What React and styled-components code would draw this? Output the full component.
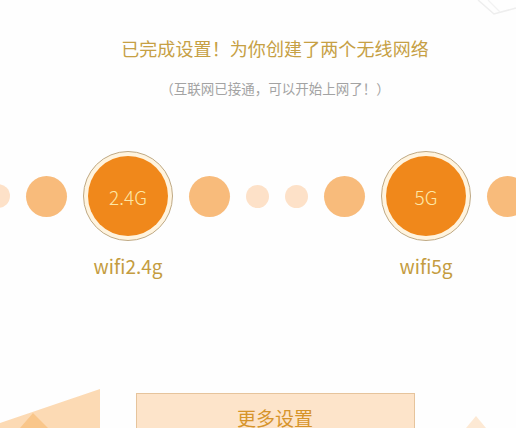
import styled, { createGlobalStyle } from 'styled-components';

const GlobalStyle = createGlobalStyle`
  html, body {
    margin: 0;
    padding: 0;
    background: #fefefe;
  }
  * {
    box-sizing: border-box;
  }
`;

const FONT = `"Noto Sans CJK SC", "Noto Sans", sans-serif`;

const tones = {
  pale: '#fde1c8',
  mid: '#f8bb7b',
};

const nodes = [
  { size: 24, tone: 'pale' },
  { size: 41, tone: 'mid' },
  { band: '2.4G', name: 'wifi2.4g' },
  { size: 41, tone: 'mid' },
  { size: 23, tone: 'pale' },
  { size: 23, tone: 'pale' },
  { size: 41, tone: 'mid' },
  { band: '5G', name: 'wifi5g' },
  { size: 41, tone: 'mid' },
];

const App = () => {
  return (
    <>
      <GlobalStyle />
      <Page>
        <TopDeco viewBox="0 0 46 20" width="46" height="20">
          <path d="M8 0 L24 14 L46 8" fill="none" stroke="#eeeeee" strokeWidth="1.5" />
          <path d="M18 0 L30 12" fill="none" stroke="#f2f2f2" strokeWidth="1.2" />
        </TopDeco>

        <Header>
          <Title>已完成设置！为你创建了两个无线网络</Title>
          <SubTitle>（互联网已接通，可以开始上网了！）</SubTitle>
        </Header>

        <Row>
          {nodes.map((n, i) =>
            n.band ? (
              <Network key={i}>
                <Ring>
                  <Core>{n.band}</Core>
                </Ring>
                <Label>{n.name}</Label>
              </Network>
            ) : (
              <Dot key={i} size={n.size} tone={n.tone} />
            )
          )}
        </Row>

        <Footer>
          <MoreButton>更多设置</MoreButton>
        </Footer>

        <LeftDeco viewBox="0 0 110 40" width="110" height="40">
          <polygon points="0,35 100,1 100,40 0,40" fill="#fcdab4" />
          <polygon points="33,25 48,40 20,40" fill="#f9c68a" />
        </LeftDeco>
        <RightDeco viewBox="0 0 20 12" width="20" height="12">
          <polygon points="10,0 20,12 0,12" fill="#fde9d4" />
        </RightDeco>
      </Page>
    </>
  );
};

export default App;

const Page = styled.div`
  position: relative;
  width: 516px;
  height: 428px;
  overflow: hidden;
  background: #fefefe;
  font-family: ${FONT};
  display: flex;
  flex-direction: column;
`;

const Header = styled.div`
  padding-left: 34px;
  display: flex;
  flex-direction: column;
  align-items: center;
`;

const Title = styled.h1`
  margin: 37px 0 0;
  font-size: 18px;
  font-weight: 400;
  line-height: 22px;
  color: #c6a044;
  letter-spacing: 0.1px;
`;

const SubTitle = styled.p`
  margin: 21px 0 0;
  font-size: 13.5px;
  line-height: 16px;
  color: #a3a3a3;
`;

const Row = styled.div`
  margin-top: 55px;
  width: 100%;
  display: flex;
  justify-content: center;
  align-items: flex-start;
  gap: 16px;
  margin-left: -1px;
`;

const Dot = styled.div`
  flex-shrink: 0;
  width: ${p => p.size}px;
  height: ${p => p.size}px;
  margin-top: ${p => (90 - p.size) / 2}px;
  border-radius: 50%;
  background: ${p => tones[p.tone]};
`;

const Network = styled.div`
  flex-shrink: 0;
  width: 90px;
  display: flex;
  flex-direction: column;
  align-items: center;
`;

const Ring = styled.div`
  width: 90px;
  height: 90px;
  border-radius: 50%;
  border: 1px solid #bfa984;
  padding: 4px;
  background: #fff4df;
`;

const Core = styled.div`
  width: 80px;
  height: 80px;
  border-radius: 50%;
  background: #f0881b;
  display: flex;
  align-items: center;
  justify-content: center;
  color: #fde7a6;
  font-size: 19px;
  font-weight: 300;
`;

const Label = styled.div`
  margin-top: 14px;
  font-size: 19px;
  line-height: 22px;
  color: #c49c40;
  white-space: nowrap;
`;

const Footer = styled.div`
  padding-left: 34px;
  display: flex;
  justify-content: center;
`;

const MoreButton = styled.button`
  margin-top: 116px;
  width: 279px;
  height: 48px;
  flex-shrink: 0;
  background: #fde4ca;
  border: 1px solid #e6c49c;
  font-family: ${FONT};
  font-size: 19px;
  color: #d6942a;
  padding: 10px 0 0;
  display: flex;
  justify-content: center;
  align-items: flex-start;
  cursor: pointer;
`;

const TopDeco = styled.svg`
  position: absolute;
  top: 0;
  right: 0;
`;

const LeftDeco = styled.svg`
  position: absolute;
  left: 0;
  bottom: 0;
`;

const RightDeco = styled.svg`
  position: absolute;
  left: 466px;
  bottom: 0;
`;
